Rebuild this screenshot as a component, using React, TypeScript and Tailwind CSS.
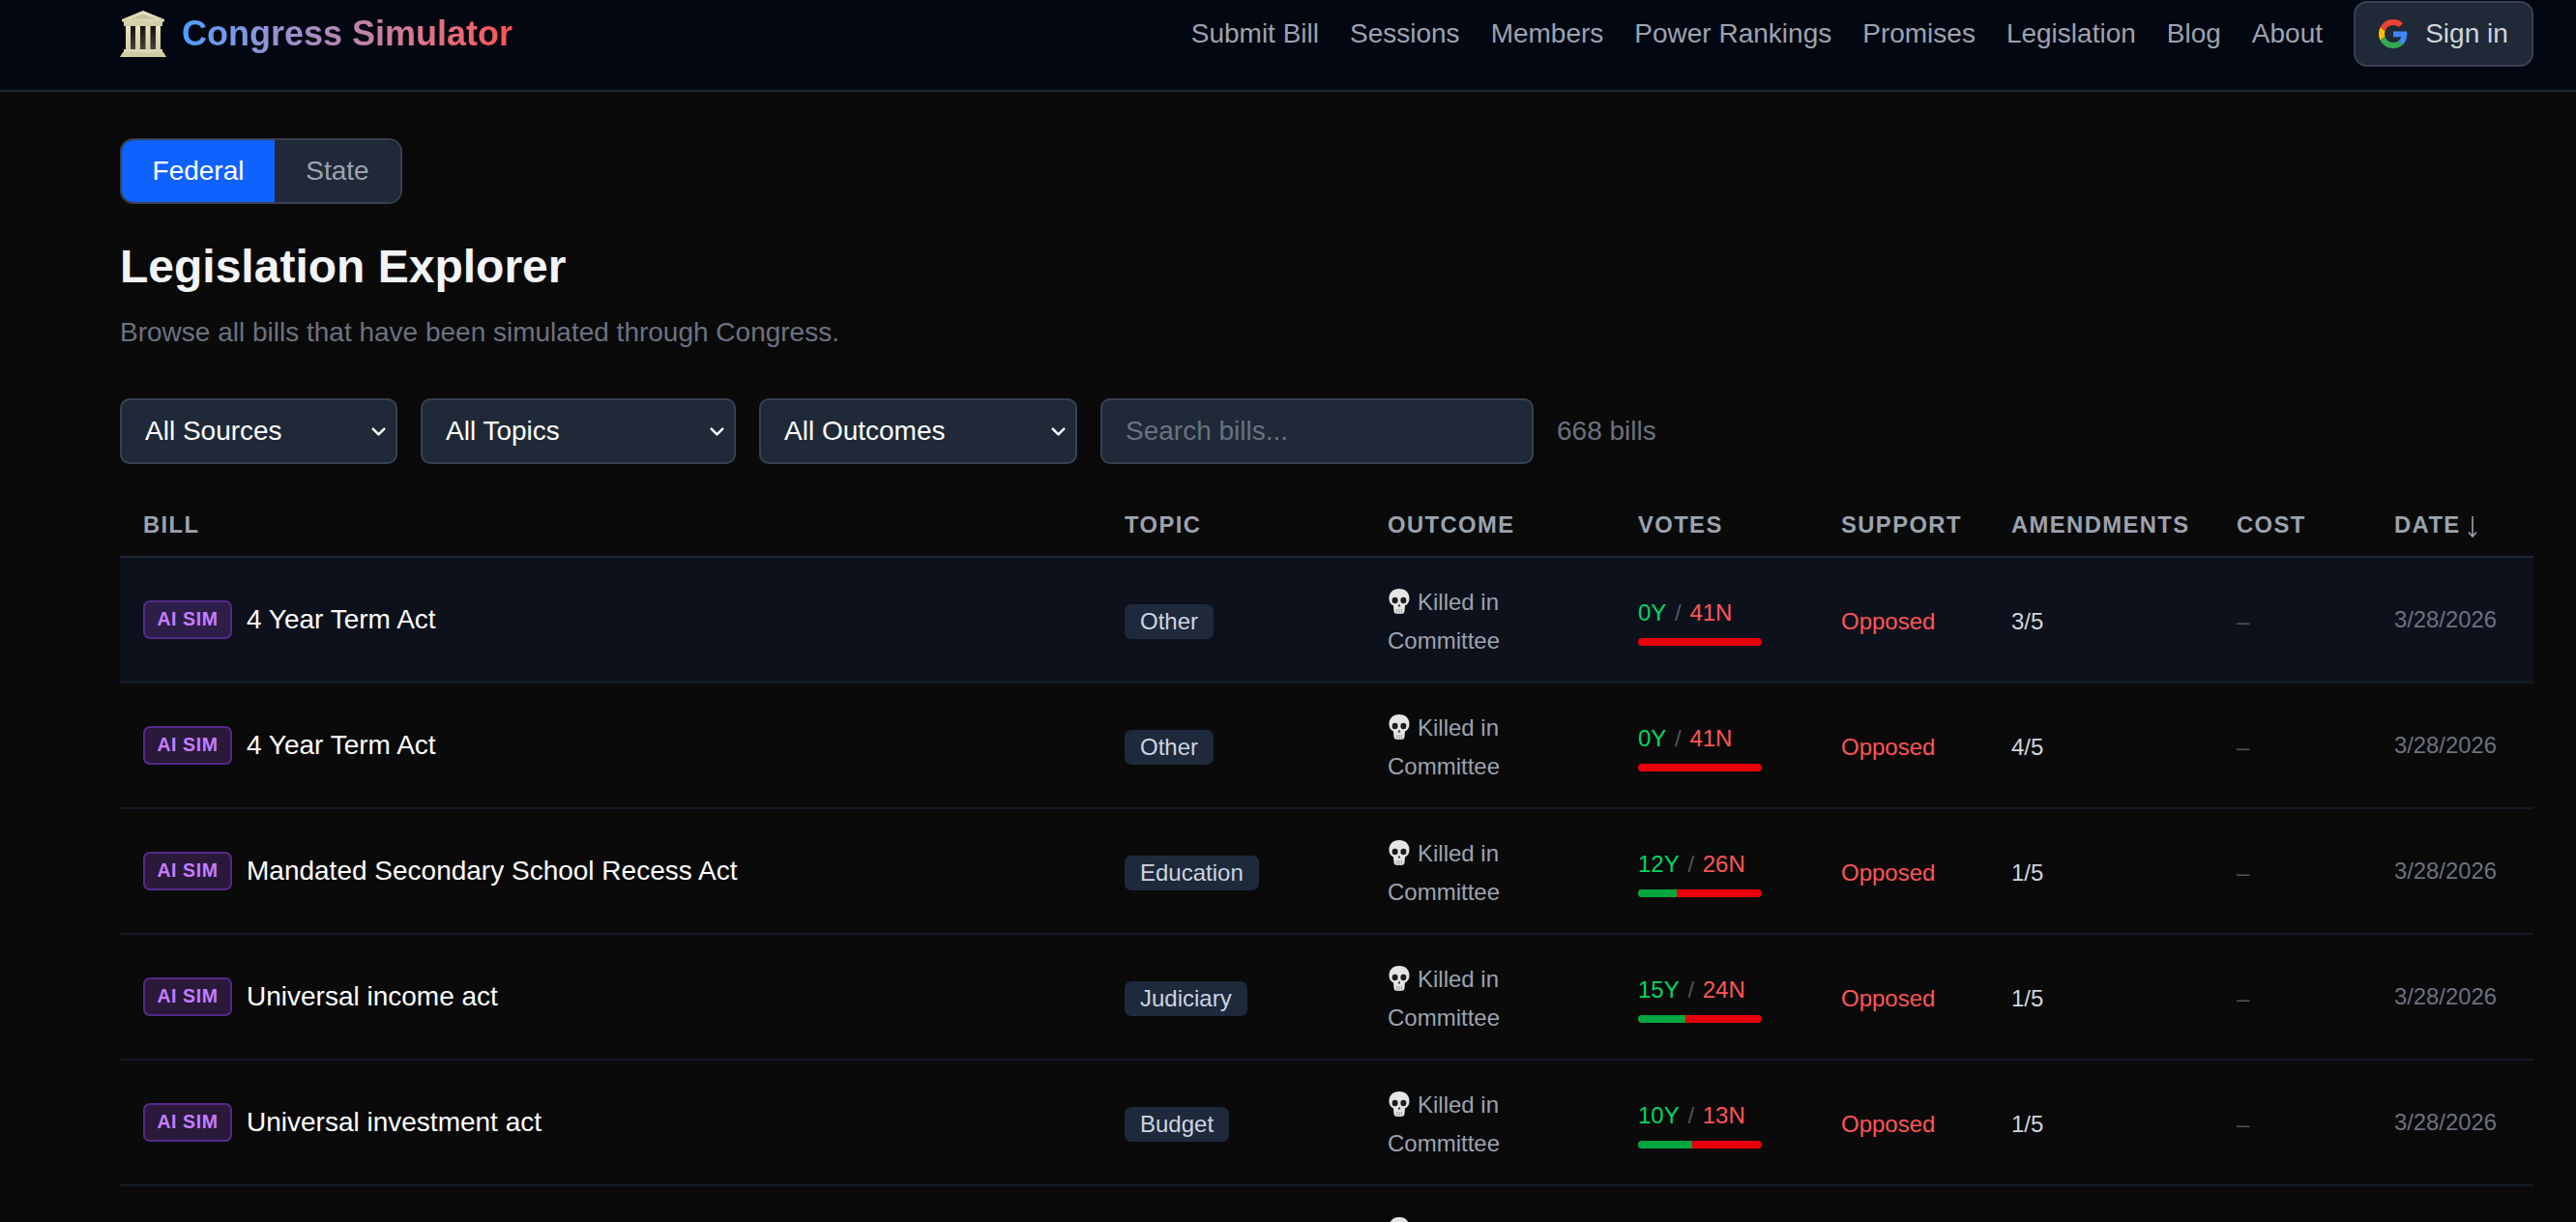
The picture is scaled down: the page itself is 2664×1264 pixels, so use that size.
import React from 'react';
import { ChevronDown } from 'lucide-react';

type Bill = { name: string; topic: string; yes: number; no: number; amendments: string };

const bills: Bill[] = [
  { name: '4 Year Term Act', topic: 'Other', yes: 0, no: 41, amendments: '3/5' },
  { name: '4 Year Term Act', topic: 'Other', yes: 0, no: 41, amendments: '4/5' },
  { name: 'Mandated Secondary School Recess Act', topic: 'Education', yes: 12, no: 26, amendments: '1/5' },
  { name: 'Universal income act', topic: 'Judiciary', yes: 15, no: 24, amendments: '1/5' },
  { name: 'Universal investment act', topic: 'Budget', yes: 10, no: 13, amendments: '1/5' },
  { name: 'Term limits act', topic: 'Other', yes: 9, no: 30, amendments: '1/5' },
];

const navLinks = ['Submit Bill', 'Sessions', 'Members', 'Power Rankings', 'Promises', 'Legislation', 'Blog', 'About'];

const TempleIcon = () => (
  <svg viewBox="0 0 48 48" className="w-[48px] h-[48px] shrink-0">
    <defs>
      <linearGradient id="stone" x1="0" y1="0" x2="0" y2="1">
        <stop offset="0" stopColor="#e8e3c4" />
        <stop offset="1" stopColor="#d2cba6" />
      </linearGradient>
      <linearGradient id="inner" x1="0" y1="0" x2="0" y2="1">
        <stop offset="0" stopColor="#15100c" />
        <stop offset="1" stopColor="#4d4338" />
      </linearGradient>
    </defs>
    <rect x="9" y="16" width="30" height="25" fill="url(#inner)" />
    <path d="M24 0 L46 9 L46 11 L44 12 L44 16 L4 16 L4 12 L2 11 L2 9 Z" fill="url(#stone)" />
    <path d="M24 3.5 L36 8.5 L12 8.5 Z" fill="#c7bf98" />
    <rect x="6" y="16" width="5" height="25" fill="url(#stone)" />
    <rect x="16" y="16" width="5" height="25" fill="url(#stone)" />
    <rect x="26.5" y="16" width="5" height="25" fill="url(#stone)" />
    <rect x="37" y="16" width="5" height="25" fill="url(#stone)" />
    <rect x="4" y="40" width="40" height="3" fill="#ddd7b4" />
    <path d="M3 43 H45 L48 48 H0 Z" fill="#d2cba6" />
  </svg>
);

const SkullIcon = () => (
  <svg viewBox="0 0 22 26" className="inline-block w-[22px] h-[26px] ml-[1px] mr-[8px] align-[-4px]">
    <path
      d="M11 0 C4.5 0 0.5 4 0.5 10 C0.5 13.5 2 16 5 17.6 L5.5 23 C5.6 24.8 7 26 8.5 26 H13.5 C15 26 16.4 24.8 16.5 23 L17 17.6 C20 16 21.5 13.5 21.5 10 C21.5 4 17.5 0 11 0 Z"
      fill="#e5e5e5"
    />
    <ellipse cx="6.6" cy="12" rx="3" ry="3.3" fill="#1c1c1c" />
    <ellipse cx="15.4" cy="12" rx="3" ry="3.3" fill="#1c1c1c" />
    <path d="M11 15.5 L9.6 18.6 H12.4 Z" fill="#2a2a2a" />
    <path d="M8.6 21 V26 M11 21 V26 M13.4 21 V26" stroke="#8a8a8a" strokeWidth="0.8" />
  </svg>
);

const GoogleIcon = () => (
  <svg viewBox="0 0 48 48" className="w-[30px] h-[30px] shrink-0">
    <path fill="#EA4335" d="M24 9.5c3.54 0 6.71 1.22 9.21 3.6l6.85-6.85C35.9 2.38 30.47 0 24 0 14.62 0 6.51 5.38 2.56 13.22l7.98 6.19C12.43 13.72 17.74 9.5 24 9.5z" />
    <path fill="#4285F4" d="M46.98 24.55c0-1.57-.15-3.09-.38-4.55H24v9.02h12.94c-.58 2.96-2.26 5.48-4.78 7.18l7.73 6c4.51-4.18 7.09-10.36 7.09-17.65z" />
    <path fill="#FBBC05" d="M10.53 28.59c-.48-1.45-.76-2.99-.76-4.59s.27-3.14.76-4.59l-7.98-6.19C.92 16.46 0 20.12 0 24c0 3.88.92 7.54 2.56 10.78l7.97-6.19z" />
    <path fill="#34A853" d="M24 48c6.48 0 11.93-2.13 15.89-5.81l-7.73-6c-2.15 1.45-4.92 2.3-8.16 2.3-6.26 0-11.57-4.22-13.47-9.91l-7.98 6.19C6.51 42.62 14.62 48 24 48z" />
  </svg>
);

const SortArrow = () => (
  <svg viewBox="0 0 10 22" className="inline-block w-[10px] h-[22px] ml-[7px] align-[-5px]" fill="none" stroke="#9ca3af" strokeWidth="1.6">
    <path d="M5 0 V21 M1 16.5 L5 21 L9 16.5" />
  </svg>
);

const FilterSelect = ({ label, width }: { label: string; width: string }) => (
  <button className={`${width} h-[68px] shrink-0 flex items-center justify-between pl-[24px] pr-[6px] bg-[#1f2937] border-2 border-[#374151] rounded-[10px] text-[28px] text-white`}>
    <span>{label}</span>
    <ChevronDown size={23} strokeWidth={2.6} className="text-white" />
  </button>
);

const BillRow = ({ bill, highlight }: { bill: Bill; highlight: boolean }) => {
  const total = bill.yes + bill.no;
  const yesPct = total === 0 ? 0 : (bill.yes / total) * 100;

  return (
    <tr className={highlight ? 'bg-[#0d111c]' : ''}>
      <td className="h-[130px] px-[24px] border-b-2 border-[#141a26]">
        <div className="flex items-center gap-[15px]">
          <span className="h-[40px] w-[92px] flex items-center justify-center rounded-[7px] border-2 border-[#55298a] bg-[#a855f7]/20 text-[#c77dff] text-[19.5px] font-bold tracking-[0.6px]">
            AI SIM
          </span>
          <span className="text-[28px] text-white">{bill.name}</span>
        </div>
      </td>
      <td className="px-[24px] pt-[4px] border-b-2 border-[#141a26]">
        <span className="inline-block h-[36px] leading-[36px] px-[16px] rounded-[7px] bg-[#1e293b] text-[#cbd5e1] text-[24px]">
          {bill.topic}
        </span>
      </td>
      <td className="px-[24px] pt-[3px] border-b-2 border-[#141a26] text-[#9ca3af] text-[24px] leading-[40px]">
        <SkullIcon />
        Killed in Committee
      </td>
      <td className="px-[24px] pt-[5px] border-b-2 border-[#141a26]">
        <div className="text-[24px] leading-[28px] whitespace-nowrap">
          <span className="text-[#00d563]">{bill.yes}Y</span>
          <span className="text-[#4b5563] px-[2px]"> / </span>
          <span className="text-[#ff5555]">{bill.no}N</span>
        </div>
        <div className="mt-[12px] w-[128px] h-[8px] rounded-full overflow-hidden bg-[#e7000b] flex">
          <div className="h-full bg-[#00a63e]" style={{ width: `${yesPct}%` }} />
        </div>
      </td>
      <td className="px-[24px] pt-[4px] border-b-2 border-[#141a26] text-[#ff5555] text-[24px]">Opposed</td>
      <td className="px-[24px] pt-[4px] border-b-2 border-[#141a26] text-[#d1d5db] text-[24px]">{bill.amendments}</td>
      <td className="px-[24px] pt-[4px] border-b-2 border-[#141a26] text-[#4b5563] text-[24px]">–</td>
      <td className="px-[24px] border-b-2 border-[#141a26] text-[#6b7280] text-[23.8px] whitespace-nowrap">3/28/2026</td>
    </tr>
  );
};

const headers = ['Bill', 'Topic', 'Outcome', 'Votes', 'Support', 'Amendments', 'Cost', 'Date'];
const colWidths = ['w-[1015px]', 'w-[272px]', 'w-[259px]', 'w-[210px]', 'w-[176px]', 'w-[233px]', 'w-[163px]', 'w-[168px]'];

export default function App() {
  return (
    <div className="h-[1264px] overflow-hidden bg-[#0a0a0a] font-['Liberation_Sans',Arial,sans-serif]">
      <header className="h-[95px] bg-[#030712] border-b-2 border-[#1f2937] pl-[124px] pr-[44px] pt-[1px] flex justify-between items-start">
        <div className="flex items-center gap-[16px] h-[68px]">
          <TempleIcon />
          <span className="text-[36px] font-bold bg-gradient-to-r from-[#4a9eff] to-[#ff5252] bg-clip-text text-transparent">
            Congress Simulator
          </span>
        </div>
        <nav className="flex items-center gap-[32px] h-[68px]">
          {navLinks.map((link) => (
            <a key={link} className="text-[28px] text-[#9ca3af]">
              {link}
            </a>
          ))}
          <button className="h-[68px] w-[186px] flex items-center justify-center gap-[18px] bg-[#1f2937] border-2 border-[#374151] rounded-[14px] text-[28px] text-[#d1d5db]">
            <GoogleIcon />
            Sign in
          </button>
        </nav>
      </header>

      <main className="pl-[124px] pr-[44px] pt-[48px]">
        <div className="inline-flex h-[68px] w-[292px] rounded-[14px] border-2 border-[#374151] overflow-hidden text-[28px]">
          <div className="w-[158px] flex items-center justify-center bg-[#0f62fe] text-white">Federal</div>
          <div className="flex-1 flex items-center justify-center bg-[#1f2937] text-[#9ca3af]">State</div>
        </div>

        <h1 className="mt-[33px] text-[48px] leading-[64px] font-bold text-[#f3f4f6]">Legislation Explorer</h1>
        <p className="mt-[20px] text-[28px] leading-[32px] text-[#6b7280]">Browse all bills that have been simulated through Congress.</p>

        <div className="mt-[52px] flex items-center gap-[24px]">
          <FilterSelect label="All Sources" width="w-[287px]" />
          <FilterSelect label="All Topics" width="w-[326px]" />
          <FilterSelect label="All Outcomes" width="w-[329px]" />
          <input
            placeholder="Search bills..."
            className="w-[448px] h-[68px] px-[24px] bg-[#1f2937] border-2 border-[#374151] rounded-[10px] text-[28px] text-white placeholder:text-[#6b7280] outline-none"
          />
          <span className="text-[28px] text-[#6b7280]">668 bills</span>
        </div>

        <table className="mt-[30px] w-[2496px] table-fixed border-separate border-spacing-0">
          <colgroup>
            {colWidths.map((w) => (
              <col key={w} className={w} />
            ))}
          </colgroup>
          <thead>
            <tr>
              {headers.map((h) => (
                <th
                  key={h}
                  className="h-[67px] px-[24px] text-left text-[23.8px] font-bold uppercase tracking-[1.4px] text-[#9ca3af] border-b-2 border-[#1f2937] whitespace-nowrap"
                >
                  {h}
                  {h === 'Date' && <SortArrow />}
                </th>
              ))}
            </tr>
          </thead>
          <tbody>
            {bills.map((bill, i) => (
              <BillRow key={i} bill={bill} highlight={i === 0} />
            ))}
          </tbody>
        </table>
      </main>
    </div>
  );
}
